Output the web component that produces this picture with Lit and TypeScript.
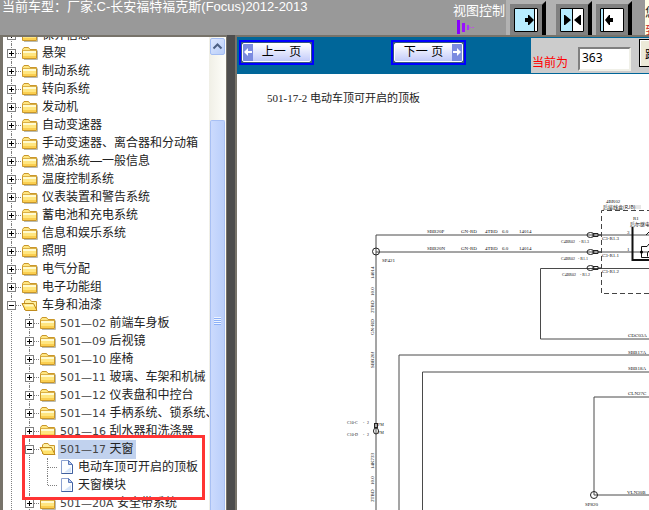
import { LitElement, html, svg, css, nothing } from "lit";
import { customElement, state } from "lit/decorators.js";

interface TreeItem {
  label: string;
  code?: string;
  open?: boolean;
  selected?: boolean;
  children?: TreeItem[];
  leaf?: boolean;
}

const TREE: TreeItem[] = [
  { label: "保养信息" },
  { label: "悬架" },
  { label: "制动系统" },
  { label: "转向系统" },
  { label: "发动机" },
  { label: "自动变速器" },
  { label: "手动变速器、离合器和分动箱" },
  { label: "燃油系统—一般信息" },
  { label: "温度控制系统" },
  { label: "仪表装置和警告系统" },
  { label: "蓄电池和充电系统" },
  { label: "信息和娱乐系统" },
  { label: "照明" },
  { label: "电气分配" },
  { label: "电子功能组" },
  {
    label: "车身和油漆",
    open: true,
    children: [
      { code: "501—02", label: "前端车身板" },
      { code: "501—09", label: "后视镜" },
      { code: "501—10", label: "座椅" },
      { code: "501—11", label: "玻璃、车架和机械" },
      { code: "501—12", label: "仪表盘和中控台" },
      { code: "501—14", label: "手柄系统、锁系统、" },
      { code: "501—16", label: "刮水器和洗涤器" },
      {
        code: "501—17",
        label: "天窗",
        open: true,
        selected: true,
        children: [
          { label: "电动车顶可开启的顶板", leaf: true },
          { label: "天窗模块", leaf: true },
        ],
      },
      { code: "501—20A", label: "安全带系统" },
    ],
  },
];

const folder = html`<svg class="icon" width="18" height="18" viewBox="0 0 18 18" aria-hidden="true">
  <path d="M3 15.500h13.500v-9" fill="none" stroke="#b9b9b0" />
  <path d="M1.500 5.500 3 3.500h4.500l1.500 2h6.500v9H1.500z" fill="#ffe680" stroke="#c9972b" />
  <path d="M2 7h13v2H2z" fill="#fffbd0" />
  <path d="M2 12h13v2H2z" fill="#fbcf50" />
  <path d="M1.500 6.500h14" stroke="#dcb045" />
</svg>`;

const folderOpen = html`<svg class="icon" width="18" height="18" viewBox="0 0 18 18" aria-hidden="true">
  <path d="M3.500 14V5l1.500-1.500h4l1.500 2h5v9" fill="#fff0a0" stroke="#c9972b" />
  <path d="M1 7.500h11.500l3.500 7H4.500z" fill="#ffe169" stroke="#c08c1e" />
  <path d="M3 8.500h9l1 2H4z" fill="#fff9c4" />
</svg>`;

const page = html`<svg class="icon" width="18" height="18" viewBox="0 0 18 18" aria-hidden="true">
  <path d="M4.500 2.500h7l4 4v9h-11z" fill="#fdfeff" stroke="#8ba0d0" />
  <path d="M14 9v5.500H7z" fill="#d5e4fa" />
  <path d="M11.500 2.500v4h4z" fill="#b7cbf0" stroke="#5a78b8" />
  <path d="M15.500 7v8.500h-11" fill="none" stroke="#40609f" />
</svg>`;

@customElement("nav-tree")
export class NavTree extends LitElement {
  static styles = css`
    :host {
      display: block;
      font: 12px/18px "Liberation Sans", "Noto Sans CJK SC", sans-serif;
      color: #222;
    }
    ul {
      list-style: none;
      margin: 0;
      padding: 0;
    }
    ul ul {
      padding-left: 18px;
    }
    li {
      position: relative;
    }
    li::before {
      content: "";
      position: absolute;
      left: 8px;
      top: 0;
      bottom: 0;
      border-left: 1px dotted #808080;
    }
    .end::before {
      bottom: auto;
      height: 9px;
    }
    .row {
      display: flex;
      align-items: center;
      height: 18px;
      white-space: nowrap;
    }
    .toggle,
    .stub {
      flex: none;
      position: relative;
      width: 18px;
      height: 18px;
      border: 0;
      padding: 0;
      background: none;
    }
    .toggle::before,
    .stub::before {
      content: "";
      position: absolute;
      left: 9px;
      right: 0;
      top: 9px;
      border-top: 1px dotted #808080;
    }
    .toggle svg {
      position: relative;
      display: block;
    }
    .icon {
      flex: none;
    }
    .name {
      margin-left: 1px;
      padding: 0 2px;
      color: inherit;
      text-decoration: none;
    }
    .selected {
      background: #c1d2ee;
    }
    .code {
      font: 11px/18px "DejaVu Sans", sans-serif;
      color: #444;
    }
    .mark {
      position: absolute;
      z-index: 1;
      left: 1px;
      top: -5px;
      width: 177px;
      bottom: -6px;
      border: 3px solid #ff3434;
      pointer-events: none;
    }
  `;

  @state() private closed = new Set<TreeItem>();

  private flip(item: TreeItem) {
    const next = new Set(this.closed);
    next.has(item) ? next.delete(item) : next.add(item);
    this.closed = next;
  }

  private item(item: TreeItem, last: boolean): unknown {
    const open = !!item.open && !this.closed.has(item);
    return html`<li class=${last ? "end" : ""}>
      <div class="row">
        ${item.leaf
          ? html`<span class="stub"></span>`
          : html`<button class="toggle" aria-label=${item.label} aria-expanded=${open} @click=${() => this.flip(item)}>
              <svg width="18" height="18" viewBox="0 0 18 18">
                <rect x="4.500" y="5.500" width="8" height="8" fill="#fff" stroke="#808080" />
                <path d=${open ? "M6 9.500h5" : "M6 9.500h5M8.500 7v5"} stroke="#000" />
              </svg>
            </button>`}
        ${item.leaf ? page : open ? folderOpen : folder}
        <a href="#" class="name ${item.selected ? "selected" : ""}"
          >${item.code ? html`<span class="code">${item.code} </span>` : nothing}${item.label}</a
        >
      </div>
      ${open && item.children ? this.list(item.children) : nothing}
      ${item.selected ? html`<div class="mark"></div>` : nothing}
    </li>`;
  }

  private list(items: TreeItem[]): unknown {
    return html`<ul>
      ${items.map((item, i) => this.item(item, i === items.length - 1 && !!item.leaf))}
    </ul>`;
  }

  render() {
    return this.list(TREE);
  }
}

const WIRES = [
  "M376 700V234H900",
  "M376 251H900",
  "M900 267.500H540.500V338H900",
  "M399 700V354H900",
  "M422.500 700V371H900",
  "M900 396H594V494H900",
];

const CONNECTORS = [234, 251, 267];

type Label = [number, number, string];

const LABELS: Label[] = [
  ...[232, 249].flatMap((y, i): Label[] => [
    [427, y, i ? "SBB20N" : "SBB20P"],
    [461, y, "GN-RD"],
    [485, y, "4TBD"],
    [502, y, "6.0"],
    [519, y, "14014"],
  ]),
  [382, 261, "SP421"],
  [602, 239, "C3-R1.3"],
  [602, 256, "C3-R1.1"],
  [602, 272, "C3-R1.2"],
  [606, 202, "4BR02"],
  [627, 233, "3"],
  [627, 250, "1"],
  [628, 336, "CDC03A"],
  [628, 353, "SBB17A"],
  [628, 369, "SBB18A"],
  [628, 394, "CLN27C"],
  [627, 493, "VLN30B"],
  [585, 505, "SP820"],
  [633, 219, "R1"],
];

const SMALL_LABELS: Label[] = [
  [561, 242, "C4BR02"],
  [579, 242, "-  R1.3"],
  [561, 259, "C4BR02"],
  [578, 259, "-  R1.1"],
  [562, 275, "C4BR02"],
  [580, 275, "-  R1.2"],
  [347, 423, "C10-C"],
  [363, 423, "-"],
  [367, 423, "2"],
  [347, 435, "C10-D"],
  [363, 435, "-"],
  [367, 435, "2"],
  [378, 425, "FM"],
  [378, 433, "FM"],
];

const UPRIGHT: Label[] = [
  [374, 278, "14014"],
  [374, 295, "10.0"],
  [374, 312, "2TBD"],
  [374, 334, "GN-RD"],
  [374, 367, "SBB20J"],
  [374, 468, "14K733"],
  [374, 484, "10.0"],
  [374, 501, "2TBD"],
];

@customElement("wiring-diagram")
export class WiringDiagram extends LitElement {
  static styles = css`
    :host {
      display: block;
      overflow: hidden;
      background: #fff;
    }
    svg {
      display: block;
    }
    .wire {
      fill: none;
      stroke: #4a4a4a;
      stroke-width: 1px;
    }
    .node {
      fill: none;
      stroke: #222;
    }
    .dash {
      fill: none;
      stroke: #444;
      stroke-dasharray: 5 3;
    }
    .relay {
      fill: none;
      stroke: #111;
    }
    .bold {
      stroke-width: 2px;
    }
    .tag {
      font: 5px "Liberation Serif", serif;
      fill: #111;
    }
    .small {
      font-size: 4px;
    }
    .cn {
      font: 5px "Noto Sans CJK SC", sans-serif;
      fill: #111;
    }
    .caption {
      font: 11px "Liberation Serif", "Noto Sans CJK SC", serif;
      fill: #222;
    }
  `;

  render() {
    return html`<svg width="663" height="627" viewBox="237 73 663 627" role="img" aria-label="电动车顶可开启的顶板">
      <text class="caption" x="267" y="101">501-17-2 电动车顶可开启的顶板</text>
      ${WIRES.map((d) => svg`<path class="wire" d=${d} />`)}
      <circle class="node" cx="376" cy="250.500" r="3.500" />
      <circle class="node" cx="594" cy="494" r="3.500" />
      <path class="dash" d="M900 209.500H601.500V292.500H900" />
      ${CONNECTORS.map(
        (y) => svg`<g class="node">
          <ellipse cx="590.500" cy=${y} rx="3.500" ry="2.500" />
          <path d=${`M593 ${y - 1.5}h5v3h-5zM598 ${y}h3`} />
        </g>`
      )}
      <g class="node">
        <rect x="374.500" y="422.500" width="3" height="4" />
        <ellipse cx="376" cy="430" rx="2.500" ry="3" />
      </g>
      <rect x="634" y="204" width="7" height="4" fill="#e6e6e6" />
      <path class="relay bold" d="M632.500 226V259H900" />
      <path class="relay" d="M641.500 256.500V245.500H647L649 243M641.500 256.500H649M646 234 649 231M647.500 255.500V251.500L650 249" />
      <circle cx="641.500" cy="251" r="1.500" />
      ${LABELS.map(([x, y, t]) => svg`<text class="tag" x=${x} y=${y}>${t}</text>`)}
      ${SMALL_LABELS.map(([x, y, t]) => svg`<text class="tag small" x=${x} y=${y}>${t}</text>`)}
      ${UPRIGHT.map(([x, y, t]) => svg`<text class="tag" transform=${`translate(${x} ${y}) rotate(-90)`}>${t}</text>`)}
      <text class="cn" x="603" y="208">后接线盒(RJB)</text>
      <text class="cn" x="630" y="225">后尔继电器</text>
    </svg>`;
  }
}

const viewIcons = [
  {
    name: "展开左侧",
    art: svg`<path d="M1 1h19v22H1z" fill="#b8ecff"/><path d="M20.500 1v22" stroke="#000"/><path d="M11 10h3V7h1l5 5-5 5h-1v-3h-3z"/>`,
  },
  {
    name: "居中",
    art: svg`<path d="M1 1h11v22H1z" fill="#b8ecff"/><path d="M12.500 1v22" stroke="#000"/><path d="M4 10V7h1l6 5-6 5H4v-3zM21 10V7h-1l-6 5 6 5h1v-3z"/>`,
  },
  {
    name: "展开右侧",
    art: svg`<path d="M1 1h2v22H1z" fill="#b8ecff"/><path d="M3.500 1v22" stroke="#000"/><path d="M13 10h-3V7H9l-4 5 4 5h1v-3h3z"/>`,
  },
];

@customElement("app-root")
export class AppRoot extends LitElement {
  static styles = css`
    :host {
      display: flex;
      flex-direction: column;
      height: 100vh;
      overflow: hidden;
      background: #999;
      font: 13px/16px "Liberation Sans", "Noto Sans CJK SC", sans-serif;
    }
    * {
      box-sizing: border-box;
    }
    header {
      display: flex;
      flex: none;
      height: 35px;
      color: #fff;
    }
    h1 {
      flex: 1;
      margin: 0;
      padding: 0 0 0 2px;
      font-size: 13px;
      line-height: 13px;
      font-weight: 400;
      white-space: nowrap;
    }
    .views {
      flex: none;
      width: 53px;
      padding-top: 3px;
      white-space: nowrap;
    }
    .views svg {
      display: block;
      margin: 1px 0 0 4px;
    }
    .tools {
      flex: none;
      display: flex;
      width: 139px;
      gap: 4px;
      padding-left: 4px;
      background: linear-gradient(#999, #999) right / 13px 100% no-repeat #b2b2b2;
    }
    .view {
      width: 36px;
      height: 35px;
      padding: 0;
      border: 0;
      background: none;
    }
    .view:first-child {
      margin-right: 6px;
    }
    .view svg {
      display: block;
    }
    .notice {
      flex: none;
      width: 4px;
      overflow: hidden;
      background: #ffffe8;
      color: #222;
      font-size: 12px;
      line-height: 18px;
      padding-top: 4px;
      white-space: nowrap;
    }
    .notice p {
      margin: 0;
    }
    .alert {
      color: #c33;
    }
    .panes {
      flex: 1;
      min-height: 0;
      display: flex;
      background: #4d4d4d;
    }
    .side {
      flex: none;
      width: 227px;
      display: flex;
      border: solid #77736a;
      border-width: 2px 1px 0 3px;
      background: #fff;
    }
    .scroll {
      flex: 1;
      min-width: 0;
      overflow: hidden;
    }
    nav-tree {
      margin-top: -11px;
    }
    .bar {
      flex: none;
      width: 17px;
      display: flex;
      flex-direction: column;
      background: linear-gradient(90deg, #f0efe6, #fefefa);
    }
    .up {
      height: 17px;
      margin: 1px 1px 65px;
      padding: 0;
      border: 1px solid #a3bdf3;
      border-radius: 2px;
      background: linear-gradient(135deg, #dfe9ff, #b8cdf8);
    }
    .up svg {
      display: block;
    }
    .thumb {
      flex: 1;
      margin: 0 1px;
      border: 1px solid #a8c0f4;
      border-bottom: 0;
      border-radius: 2px 2px 0 0;
      background: linear-gradient(90deg, #cbdafd, #bacffb);
      display: flex;
      justify-content: center;
      align-items: center;
      padding-top: 10px;
    }
    .content {
      flex: 1;
      min-width: 0;
      margin-left: 8px;
      border: solid #77736a;
      border-width: 2px 0 0 2px;
      display: flex;
      flex-direction: column;
      background: #fff;
    }
    .strip {
      flex: none;
      display: flex;
      height: 37px;
      background: #069;
    }
    .pager {
      flex: 1;
      display: flex;
      align-items: flex-start;
      gap: 77px;
      padding: 3px 0 0 2px;
    }
    .turn {
      flex: none;
      display: flex;
      align-items: center;
      width: 75px;
      height: 25px;
      padding: 1px;
      border: 2px solid #00f;
      background: #33557f;
    }
    .face {
      flex: 1;
      display: flex;
      align-items: stretch;
      height: 19px;
      border: 1px solid #fff;
      border-radius: 2px;
      overflow: hidden;
      background: linear-gradient(#fff, #c3cbfa);
      color: #000;
      font: 12px/17px "Liberation Sans", "Noto Sans CJK SC", sans-serif;
      white-space: nowrap;
    }
    .face span {
      flex: 1;
      text-align: center;
    }
    .face svg {
      flex: none;
      background: #7b8be0;
    }
    .jump {
      flex: none;
      display: flex;
      align-items: center;
      height: 35px;
      margin-top: 1px;
      padding: 0 0 0 1px;
      background: #ccc;
      width: 118px;
      overflow: hidden;
    }
    .jump label {
      flex: none;
      width: 46px;
      padding-top: 14px;
      color: #f00;
      font-size: 12px;
    }
    .jump input {
      flex: none;
      width: 53px;
      height: 24px;
      margin: 6px 8px 0 0;
      padding: 0 2px 2px;
      border: 2px solid;
      border-color: #808080 #f0f0e8 #f0f0e8 #808080;
      background: #fff;
      color: #000;
      font: 12px "Noto Sans", sans-serif;
    }
    .go {
      flex: none;
      align-self: flex-start;
      height: 28px;
      margin-top: 1px;
      padding: 0 5px;
      border: 1px solid #000;
      background: #ece9d8;
      box-shadow: inset 1px 1px #fff;
      font: 12px "Noto Sans CJK SC", sans-serif;
    }
    wiring-diagram {
      flex: 1;
      min-height: 0;
    }
  `;

  render() {
    return html`
      <header>
        <h1>当前车型：厂家:C-长安福特福克斯(Focus)2012-2013</h1>
        <div class="views">
          视图控制
          <svg width="18" height="14" viewBox="0 0 18 14" aria-hidden="true">
            <path d="M1.500 0v14" stroke="#80f" stroke-width="3" />
            <path d="M6.500 3v9" stroke="#91f" stroke-width="3" />
            <path d="M11 5v5" stroke="#a3f" stroke-width="2" />
            <path d="M12 7.500h2M15 7.500h2" stroke="#b5d" />
          </svg>
        </div>
        <div class="tools">
          ${viewIcons.map(
            (v) => html`<button class="view" aria-label=${v.name}>
              <svg width="36" height="35" viewBox="0 0 36 35">
                <path d="M0 4h32l4-3v34H0z" fill="#808080" />
                <path d="M32 5l4-4v34h-4z" />
                <path d="M4 8h24v24H4z" fill="#fff" />
                <g transform="translate(4 8)">${v.art}</g>
                <path d="M4.500 8.500h23v23h-23z" fill="none" stroke="#000" />
              </svg>
            </button>`
          )}
        </div>
        <div class="notice">
          <p>您好</p>
          <p class="alert">到期</p>
        </div>
      </header>
      <main class="panes">
        <nav class="side">
          <div class="scroll"><nav-tree></nav-tree></div>
          <div class="bar">
            <button class="up" aria-label="向上滚动">
              <svg width="13" height="15" viewBox="0 0 13 15">
                <path d="M2.500 9.500 6.500 5.500l4 4" fill="none" stroke="#4d6185" stroke-width="2" />
              </svg>
            </button>
            <div class="thumb">
              <svg width="7" height="8" viewBox="0 0 7 8" aria-hidden="true">
                <path d="M0 .5h7M0 2.500h7M0 4.500h7M0 6.500h7" stroke="#eef4fe" />
                <path d="M0 1.500h7M0 3.500h7M0 5.500h7M0 7.500h7" stroke="#8cb0f8" />
              </svg>
            </div>
          </div>
        </nav>
        <section class="content">
          <div class="strip">
            <div class="pager">
              <button class="turn">
                <span class="face">
                  <svg width="10" height="17" viewBox="0 0 10 17" aria-hidden="true"><path d="M1 8l4-4v3h4v2H5v3z" fill="#fff" /></svg>
                  <span>上一 页</span>
                </span>
              </button>
              <button class="turn">
                <span class="face">
                  <span>下一 页</span>
                  <svg width="10" height="17" viewBox="0 0 10 17" aria-hidden="true"><path d="M9 8 5 4v3H1v2h4v3z" fill="#fff" /></svg>
                </span>
              </button>
            </div>
            <form class="jump">
              <label for="page">当前为</label>
              <input id="page" value="363" />
              <button class="go" type="button">跳转</button>
            </form>
          </div>
          <wiring-diagram></wiring-diagram>
        </section>
      </main>
    `;
  }
}
